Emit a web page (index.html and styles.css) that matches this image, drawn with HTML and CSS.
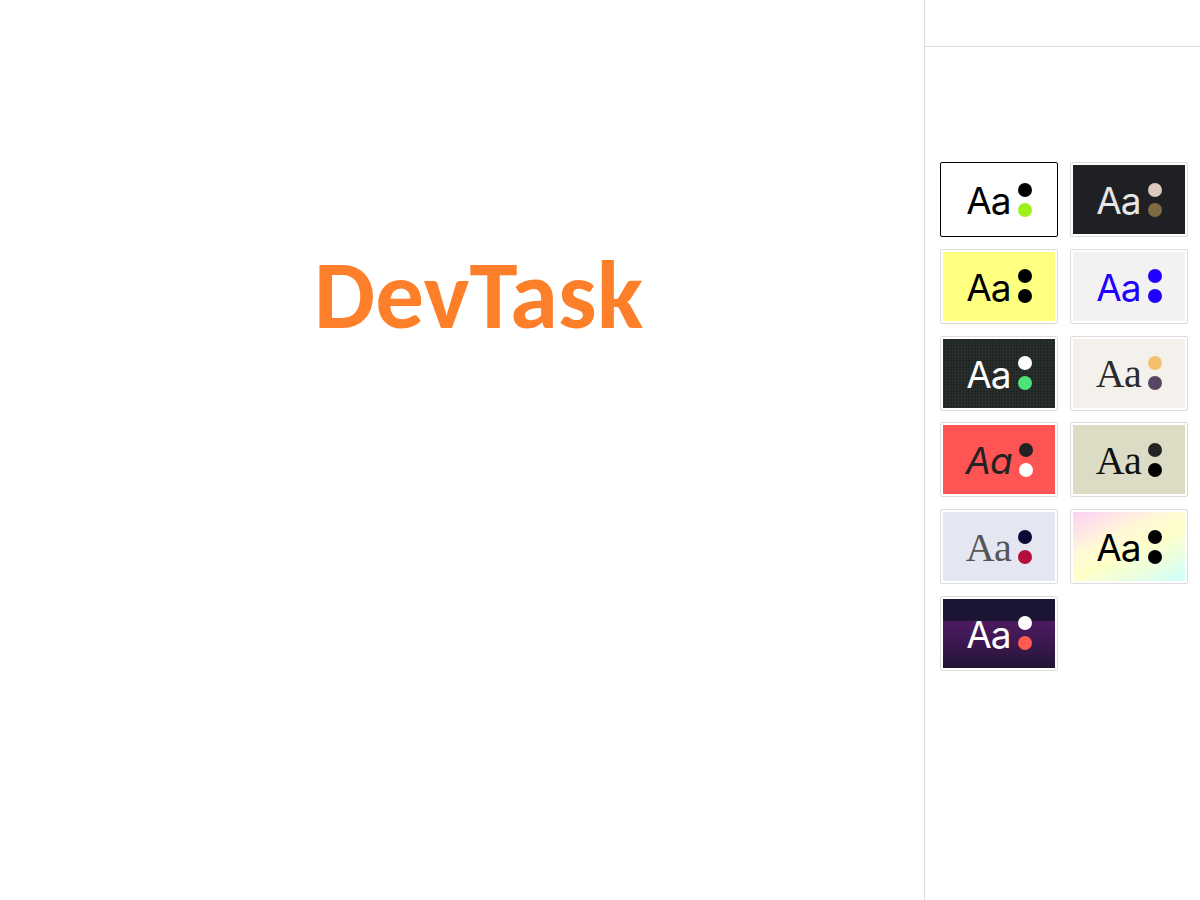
FILE: index.html
```html
<!DOCTYPE html>
<html lang="en">
<head>
<meta charset="utf-8">
<title>DevTask</title>
<link rel="stylesheet" href="styles.css">
</head>
<body>
<div class="app">
  <main class="main">
    <h1 class="logo">DevTask</h1>
  </main>
  <aside class="sidebar">
    <div class="sidebar-header"></div>
    <div class="themes">
      <div class="card selected"><div class="swatch t-light"><span class="aa">Aa</span><span class="dots"><i class="d1"></i><i class="d2"></i></span></div></div>
      <div class="card"><div class="swatch t-dark"><span class="aa">Aa</span><span class="dots"><i class="d1"></i><i class="d2"></i></span></div></div>
      <div class="card"><div class="swatch t-yellow"><span class="aa">Aa</span><span class="dots"><i class="d1"></i><i class="d2"></i></span></div></div>
      <div class="card"><div class="swatch t-blue"><span class="aa">Aa</span><span class="dots"><i class="d1"></i><i class="d2"></i></span></div></div>
      <div class="card"><div class="swatch t-forest"><span class="aa">Aa</span><span class="dots"><i class="d1"></i><i class="d2"></i></span></div></div>
      <div class="card"><div class="swatch t-paper"><span class="aa serif">Aa</span><span class="dots"><i class="d1"></i><i class="d2"></i></span></div></div>
      <div class="card"><div class="swatch t-red"><span class="aa italic">Aa</span><span class="dots"><i class="d1"></i><i class="d2"></i></span></div></div>
      <div class="card"><div class="swatch t-sage"><span class="aa serif">Aa</span><span class="dots"><i class="d1"></i><i class="d2"></i></span></div></div>
      <div class="card"><div class="swatch t-lavender"><span class="aa serif">Aa</span><span class="dots"><i class="d1"></i><i class="d2"></i></span></div></div>
      <div class="card"><div class="swatch t-rainbow"><span class="aa">Aa</span><span class="dots"><i class="d1"></i><i class="d2"></i></span></div></div>
      <div class="card"><div class="swatch t-night"><span class="aa">Aa</span><span class="dots"><i class="d1"></i><i class="d2"></i></span></div></div>
    </div>
  </aside>
</div>
</body>
</html>
```

FILE: styles.css
```css
* { box-sizing: border-box; }
html, body { margin: 0; padding: 0; background: #fff; }
body { font-family: Inter, "Noto Sans", sans-serif; }

.app {
  display: flex;
  width: 1200px;
  height: 900px;
}

.main {
  width: 924px;
  flex: none;
  padding-top: 245px;
  padding-left: 314px;
}

.logo {
  margin: 0;
  font-family: Carlito, Lato, "Open Sans", sans-serif;
  font-weight: 700;
  font-size: 97px;
  line-height: 100px;
  color: #fe7f2a;
  letter-spacing: 0;
}

.sidebar {
  flex: 1;
  border-left: 1px solid #dcdcdc;
  display: flex;
  flex-direction: column;
}

.sidebar-header {
  height: 47px;
  border-bottom: 1px solid #dcdcdc;
}

.themes {
  padding: 115px 12px 0 15px;
  display: grid;
  grid-template-columns: 118px 118px;
  grid-auto-rows: 75px;
  column-gap: 12px;
  row-gap: 11.8px;
}

.card {
  border: 1px solid #dcdcdc;
  border-radius: 2px;
  padding: 2px;
  background: #fff;
}
.card.selected {
  border-color: #000;
}

.swatch {
  width: 100%;
  height: 100%;
  display: flex;
  align-items: center;
  justify-content: center;
  gap: 7px;
}

.aa {
  font-family: Inter, "Noto Sans", sans-serif;
  font-size: 37px;
  line-height: 1;
  letter-spacing: -1px;
  padding-top: 2px;
}
.aa.serif {
  font-family: "Liberation Serif", "DejaVu Serif", serif;
  font-size: 40px;
  letter-spacing: -0.5px;
}
.aa.italic { font-style: italic; }

.dots {
  display: flex;
  flex-direction: column;
  gap: 6px;
}
.dots i {
  display: block;
  width: 14px;
  height: 14px;
  border-radius: 50%;
}

.t-light { background: #fff; color: #000; }
.t-light .d1 { background: #000; }
.t-light .d2 { background: #9ef01a; }

.t-dark { background: #1f2023; color: #e6e6e6; }
.t-dark .d1 { background: #dccbbd; }
.t-dark .d2 { background: #7d6a45; }

.t-yellow { background: #ffff80; color: #000; }
.t-yellow .d1, .t-yellow .d2 { background: #000; }

.t-blue { background: #f2f2f2; color: #2200ff; }
.t-blue .d1, .t-blue .d2 { background: #2200ff; }

.t-forest {
  background-color: #202624;
  background-image:
    repeating-linear-gradient(0deg, rgba(255,255,255,0.035) 0 1px, transparent 1px 3px),
    repeating-linear-gradient(90deg, rgba(255,255,255,0.035) 0 1px, transparent 1px 3px);
  color: #fff;
}
.t-forest .d1 { background: #fff; }
.t-forest .d2 { background: #4ee27a; }

.t-paper { background: #f4f1ec; color: #2a2a2a; }
.t-paper .d1 { background: #f3c06e; }
.t-paper .d2 { background: #564563; }

.t-red { background: #ff5454; color: #232323; }
.t-red .d1 { background: #232323; }
.t-red .d2 { background: #fff; }

.t-sage { background: #dcdcc4; color: #111; }
.t-sage .d1 { background: #232323; }
.t-sage .d2 { background: #000; }

.t-lavender { background: #e4e6f1; color: #555; }
.t-lavender .d1 { background: #0b0836; }
.t-lavender .d2 { background: #b50d3c; }

.t-rainbow {
  background: linear-gradient(155deg, #ffd0f5 0%, #fff8d8 35%, #ffffc8 55%, #e6ffe4 80%, #ccffff 100%);
  color: #000;
}
.t-rainbow .d1, .t-rainbow .d2 { background: #000; }

.t-night {
  background: linear-gradient(180deg, #1c1433 0%, #1c1433 32%, #4c1b5f 32%, #3c1850 65%, #221534 100%);
  color: #fff;
}
.t-night .d1 { background: #fff; }
.t-night .d2 { background: #ff5a4f; }
```
